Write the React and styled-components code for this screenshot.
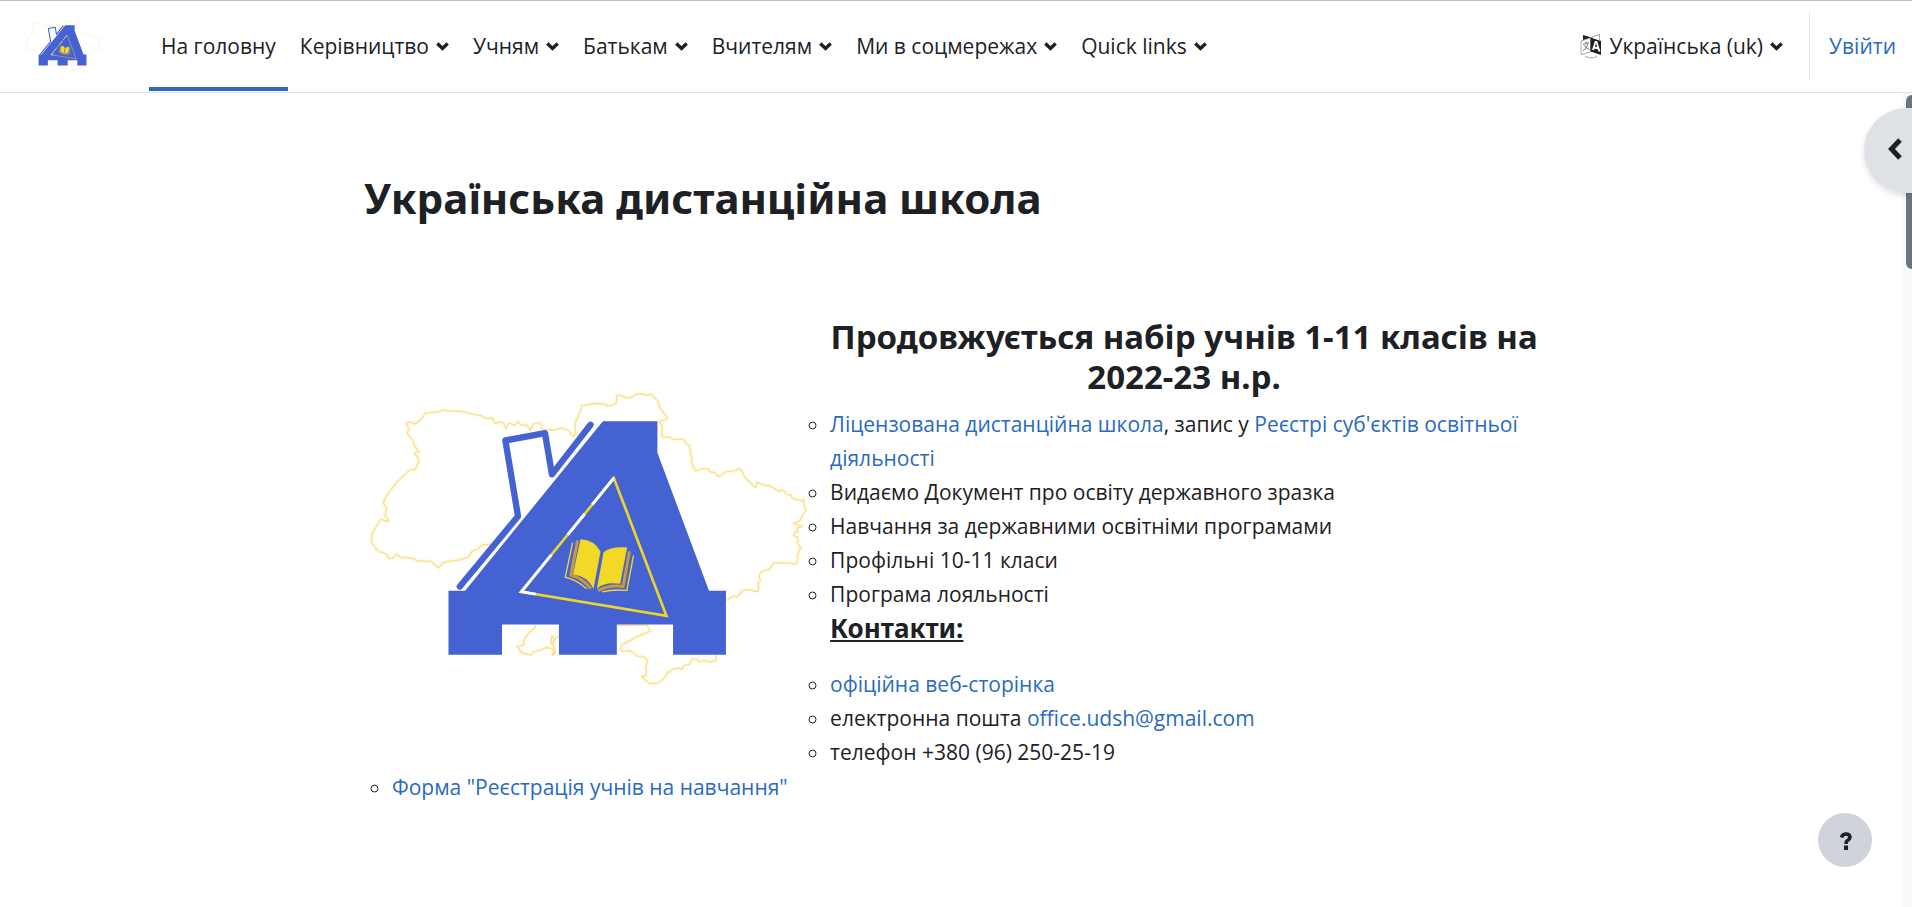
import React from "react";
import styled, { createGlobalStyle } from "styled-components";

const ink = "#1d2125";
const blue = "#2b6abf";

const GlobalStyle = createGlobalStyle`
  *, *::before, *::after { box-sizing: border-box; }
  body {
    margin: 0;
    background: #fff;
    color: ${ink};
    font: 400 21px/34px "Segoe UI", "Open Sans", "Noto Sans", sans-serif;
  }
  h1, h2, h3 { font-family: "Segoe UI", "Noto Sans", sans-serif; }
  button { font: inherit; color: inherit; }
`;

const Page = styled.div`
  min-height: 100vh;
  display: flex;
  flex-direction: column;
`;

const Header = styled.header`
  height: 93px;
  display: flex;
  align-items: stretch;
  padding: 0 0 1px 24px;
  border-top: 1px solid #bdbdbd;
  border-bottom: 1px solid #dee2e6;
`;

const Brand = styled.a`
  display: flex;
  align-items: center;
  width: 77px;
  margin-right: 48px;
`;

const Emblem = styled.svg`
  display: block;
  width: 100%;
`;

const Menu = styled.nav`
  display: flex;
  flex: 1;
`;

const MenuLink = styled.a`
  display: flex;
  align-items: center;
  padding: 0 12px;
  color: ${ink};
  text-decoration: none;
  white-space: nowrap;
  border-bottom: 4px solid ${(p) => (p.$active ? blue : "transparent")};
  border-top: 4px solid transparent;
`;

const MenuButton = styled.button`
  display: flex;
  align-items: center;
  gap: 7px;
  padding: 0 12px;
  border: 0;
  background: none;
  white-space: nowrap;
  cursor: pointer;
`;

const LanguageButton = styled(MenuButton)`
  padding: 0 26px 0 0;
`;

const LoginArea = styled.div`
  display: flex;
  align-items: center;
  margin: 11px 0;
  padding: 0 16px 0 19px;
  border-left: 1px solid #dee2e6;
`;

const Link = styled.a`
  color: ${blue};
  text-decoration: none;
`;

const Body = styled.div`
  flex: 1;
  display: flex;
`;

const Main = styled.main`
  flex: 1;
  padding: 78px 24px 48px;
`;

const Content = styled.div`
  max-width: 1174px;
  margin: 0 auto;
`;

const SiteTitle = styled.h1`
  margin: 0 0 92px;
  font-size: 42px;
  line-height: 54px;
  font-weight: 700;
`;

const Intro = styled.section`
  display: flex;
`;

const Picture = styled.div`
  flex: 0 0 38%;
`;

const Details = styled.div`
  flex: 1;
  padding-left: 20px;
`;

const Announcement = styled.h2`
  margin: 0 0 10px;
  font-size: 33px;
  line-height: 40px;
  font-weight: 700;
  text-align: center;
`;

const ContactsTitle = styled.h3`
  margin: 0 0 22px;
  font-size: 26px;
  line-height: 34px;
  font-weight: 700;
  text-decoration: underline;
`;

const List = styled.ul`
  margin: 0;
  padding-left: ${(p) => (p.$indented ? "28px" : "0")};
  list-style: circle;
`;

const ScrollTrack = styled.div`
  flex: 0 0 10px;
  padding: 2px 0 0 4px;
  background: #f8f9fa;
`;

const ScrollThumb = styled.div`
  height: 174px;
  border-radius: 6px 0 0 6px;
  background: #6c757d;
`;

const DrawerToggle = styled.button`
  position: absolute;
  top: 108px;
  right: 0;
  width: 48px;
  height: 85px;
  display: flex;
  align-items: center;
  justify-content: flex-end;
  padding: 0 10px 4px 0;
  border: 0;
  border-radius: 43px 0 0 43px;
  background: #dee2e6;
  box-shadow: 0 3px 6px rgba(0, 0, 0, 0.12);
  cursor: pointer;
`;

const HelpButton = styled.button`
  position: fixed;
  right: 40px;
  bottom: 40px;
  width: 54px;
  height: 54px;
  display: flex;
  align-items: center;
  justify-content: center;
  padding: 2px 0 0 2px;
  border: 0;
  border-radius: 50%;
  background: #ced4da;
  cursor: pointer;
`;

const Down = () => (
  <svg width="13" height="9" viewBox="0 0 13 9" aria-hidden="true">
    <path d="M1.300 1.500 6.500 6.500l5.200-5" fill="none" stroke={ink} strokeWidth="3.300" />
  </svg>
);

const LanguageIcon = () => (
  <svg width="22" height="25" viewBox="0 0 22 25" aria-hidden="true">
    <path d="M3 1 13 4 8 7 3 6z" fill={ink} />
    <path d="M1 7 10.500 4v14L1 20.500z" fill="#fff" stroke="#b9a49a" />
    <path d="M3 10.500 9 8.500M6 7.500v2M8 9.500Q7 14 3 17M4.500 11.500Q6 14 9.500 15.500" fill="none" stroke="#777" />
    <path d="M10.500 3.500 21 7v14L10.500 17.500z" fill={ink} />
    <path d="M13 16 15.500 8h1l3 9.500M14 13.500l4.500 1" fill="none" stroke="#fff" strokeWidth="1.800" />
    <path d="M10.500 3.500 19.500.5v6M5 22q5 3.500 12 .5" fill="none" stroke="#a5a5a5" />
  </svg>
);

const mapMain =
  "M425 520 412 523 398 521 385 536 368 541 356 560 330 568 290 573 280 578 266 592 254 582 240 571 230 573 215 571 203 572 190 564 165 560 158 563 140 552 130 561 118 565 112 553 100 546 85 543 64 515 65 492 80 465 92 446 115 453 114 446 105 437 109 412 100 397 108 377 140 335 178 299 195 296 206 275 205 262 193 248 208 243 195 228 188 208 172 188 176 175 169 156 182 153 195 160 215 145 225 127 262 123 282 117 295 121 320 121 350 124 375 132 390 133 410 143 428 141 436 158 448 154 462 156 468 173 478 157 495 163 505 153 515 163 532 163 541 178 550 160 570 155 580 178 600 176 608 179 635 172 655 178 672 198 678 185 676 160 690 125 698 105 735 98 770 100 772 106 790 103 800 95 803 73 820 76 830 82 846 79 865 68 897 73 905 70 927 92 930 110 953 138 951 145 928 152 939 168 937 196 946 200 958 198 970 206 1002 205 1010 220 1020 224 1024 250 1028 265 1025 270 1037 300 1048 300 1056 294 1075 294 1084 304 1096 306 1108 318 1130 303 1158 300 1168 293 1178 299 1185 318 1217 350 1222 347 1222 335 1250 345 1260 344 1290 362 1300 357 1314 372 1325 372 1330 383 1358 391 1365 386 1363 397 1370 418 1352 450 1333 458 1360 468 1343 472 1347 484 1336 484 1333 495 1345 500 1346 520 1355 532 1345 553 1345 570 1340 580 1306 577 1273 577 1262 595 1235 604 1230 615 1233 632 1226 640 1229 652 1225 663 1215 663 1206 658 1180 660 1163 680 1152 677 1132 690";

const mapSouth =
  "M1100 855 1100 871 1080 875 1065 870 1050 875 1045 867 1030 865 1020 882 1005 885 998 897 988 893 970 897 955 907 945 924 925 938 900 940 890 932 877 918 890 915 891 900 888 890 893 880 893 868 880 858 865 858 840 841 818 843 812 835 818 823 870 796 902 782 893 765 802 765M555 765 556 772 548 780 540 783 522 810 522 824 503 828 515 848 545 854 550 846 575 838 590 832 605 834 613 840 608 855 615 850 617 840 611 825 604 818 607 795 614 805 609 820 617 806 627 798";

const SchoolEmblem = ({ viewBox, title }) => (
  <Emblem viewBox={viewBox} role="img" aria-label={title}>
    <g fill="none" strokeLinejoin="round">
      <path d={mapMain + mapSouth} stroke="#fffbee" strokeWidth="16" />
      <path d={mapMain + mapSouth} stroke="#f8df8e" strokeWidth="4" />
    </g>
    <path
      d="M330 648 505 437 467 209 586 187 607 311 723 162"
      fill="none"
      stroke="#4562d2"
      strokeWidth="19"
      strokeLinecap="round"
      strokeLinejoin="round"
    />
    <path
      d="M296 661H346L760 151H924V246L1079 661H1130V853H971V762H802V853H628V762H457V853H296Z"
      fill="#4562d2"
    />
    <path d="M793 322 515 664 951 736Z" fill="none" stroke="#efd52b" strokeWidth="8" />
    <path
      d="M793 322 728 402M705 430 655 492M605 553 515 664 558 671"
      fill="none"
      stroke="#fff"
      strokeWidth="9"
    />
    <g fill="#f3d926">
      <path d="M693 506Q735 508 753 543L732 655Q715 617 670 612Z" />
      <path d="M762 545Q785 527 833 531L812 640Q765 633 742 655Z" />
    </g>
    <g fill="none" stroke="#c9993b" strokeWidth="9">
      <path d="M684 510 664 614Q700 624 724 655" />
      <path d="M840 543 821 648Q775 643 746 661" />
    </g>
    <g fill="none" stroke="#f3d926" strokeWidth="4">
      <path d="M669 516 647 620Q685 630 711 655" />
      <path d="M852 555 832 660Q790 656 758 664" />
    </g>
  </Emblem>
);

const menus = ["Керівництво", "Учням", "Батькам", "Вчителям", "Ми в соцмережах", "Quick links"];

export default function App() {
  return (
    <Page>
      <GlobalStyle />
      <Header>
        <Brand href="#">
          <SchoolEmblem viewBox="42 42 1341 930" title="Українська дистанційна школа" />
        </Brand>
        <Menu>
          <MenuLink href="#" $active>На головну</MenuLink>
          {menus.map((name) => (
            <MenuButton key={name} type="button">
              {name}
              <Down />
            </MenuButton>
          ))}
        </Menu>
        <LanguageButton type="button">
          <LanguageIcon />
          Українська (uk)
          <Down />
        </LanguageButton>
        <LoginArea>
          <Link href="#">Увійти</Link>
        </LoginArea>
      </Header>
      <Body>
        <Main>
          <Content>
            <SiteTitle>Українська дистанційна школа</SiteTitle>
            <Intro>
              <Picture>
                <SchoolEmblem viewBox="42 -162 1341 1362" title="Емблема школи" />
              </Picture>
              <Details>
                <Announcement>Продовжується набір учнів 1-11 класів на 2022-23 н.р.</Announcement>
                <List>
                  <li>
                    <Link href="#">Ліцензована дистанційна школа</Link>, запис у{" "}
                    <Link href="#">Реєстрі суб'єктів освітньої діяльності</Link>
                  </li>
                  <li>Видаємо Документ про освіту державного зразка</li>
                  <li>Навчання за державними освітніми програмами</li>
                  <li>Профільні 10-11 класи</li>
                  <li>Програма лояльності</li>
                </List>
                <ContactsTitle>Контакти:</ContactsTitle>
                <List>
                  <li><Link href="#">офіційна веб-сторінка</Link></li>
                  <li>електронна пошта <Link href="#">office.udsh@gmail.com</Link></li>
                  <li>телефон +380 (96) 250-25-19</li>
                </List>
              </Details>
            </Intro>
            <List $indented>
              <li><Link href="#">Форма "Реєстрація учнів на навчання"</Link></li>
            </List>
          </Content>
        </Main>
        <ScrollTrack>
          <ScrollThumb />
        </ScrollTrack>
      </Body>
      <DrawerToggle type="button" aria-label="Відкрити панель блоків">
        <svg width="14" height="22" viewBox="0 0 14 22" aria-hidden="true">
          <path d="M12 2 3.500 11 12 20" fill="none" stroke={ink} strokeWidth="5" />
        </svg>
      </DrawerToggle>
      <HelpButton type="button" aria-label="Довідка">
        <svg width="12" height="18" viewBox="0 0 12 18" aria-hidden="true">
          <path d="M1.500 5.500Q2.500 2 6 2q4 0 4 3.300 0 1.700-2.300 3Q6 9.300 6 12" fill="none" stroke={ink} strokeWidth="3.600" />
          <path d="M4 13.500h4V18H4z" fill={ink} />
        </svg>
      </HelpButton>
    </Page>
  );
}
